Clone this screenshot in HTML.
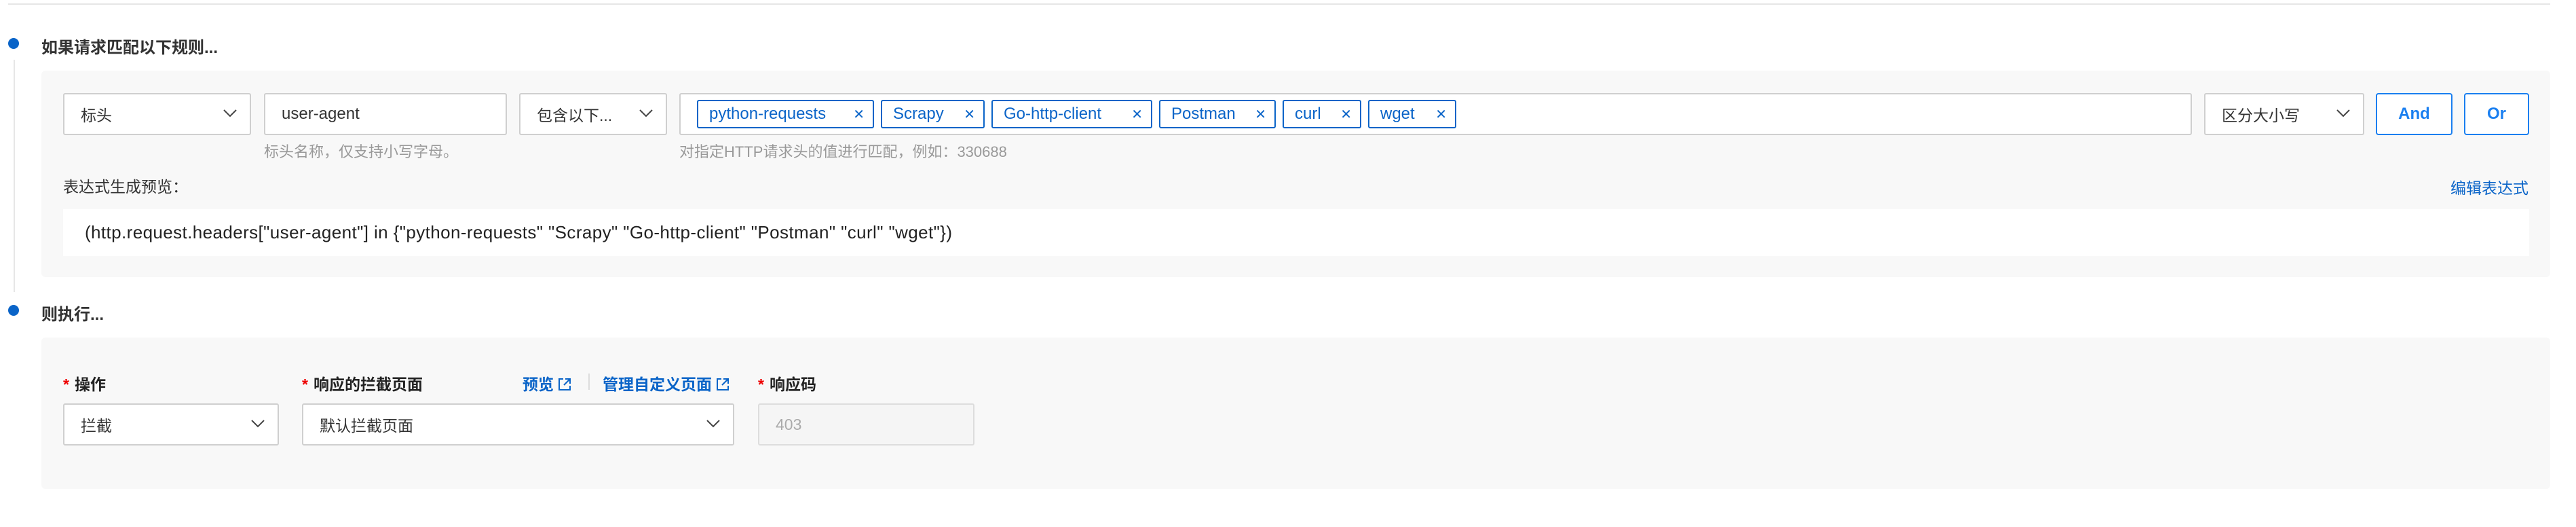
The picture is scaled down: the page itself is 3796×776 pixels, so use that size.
<!DOCTYPE html>
<html><head><meta charset="utf-8"><style>
*{box-sizing:border-box;margin:0;padding:0}
body{width:3796px;height:776px;background:#fff;position:relative;overflow:hidden;font-family:"Liberation Sans","Noto Sans CJK SC",sans-serif;font-size:23px;color:#333}
.a{position:absolute}
.box{position:absolute;background:#fff;border:2px solid #cfcfcf;border-radius:3px;display:flex;align-items:center;padding-left:24px}
.chev{position:absolute;right:18px;top:50%;margin-top:-8px}
.tag{position:absolute;top:147px;height:42px;border:2px solid #0a64c8;border-radius:3px;color:#0a64c8;display:flex;align-items:center;padding-left:16px;font-size:24px;background:#fff}
.tag span{position:absolute;right:12px;font-size:20px;font-weight:300}
.lbl{position:absolute;top:547px;font-weight:bold;font-size:23px;color:#222}
.lbl i{color:#e00;font-style:normal;margin-right:8px}
.btn{position:absolute;top:137px;height:62px;border:2px solid #1a7ff0;border-radius:4px;color:#1a7ff0;font-weight:bold;display:flex;align-items:center;justify-content:center;background:#fff;font-size:24px}
.help{position:absolute;top:206px;color:#999;font-size:22px}
.link{color:#0a64c8}
</style></head><body>
<div class="a" style="left:12px;top:5px;width:3746px;height:2px;background:#e6e6e6"></div>
<div class="a" style="left:12px;top:56px;width:16px;height:16px;border-radius:50%;background:#0a64c8"></div>
<div class="a" style="left:20px;top:88px;width:2px;height:342px;background:#e6e6e6"></div>
<div class="a" style="left:61px;top:50px;font-size:24px;font-weight:bold;color:#333">如果请求匹配以下规则...</div>
<div class="a" style="left:61px;top:104px;width:3697px;height:304px;background:#f8f8f8;border-radius:6px"></div>

<div class="box" style="left:93px;top:137px;width:277px;height:62px">标头<svg class="chev" width="22" height="14" viewBox="0 0 22 14"><polyline points="2,2 11,11 20,2" fill="none" stroke="#444" stroke-width="2"/></svg></div>
<div class="box" style="left:389px;top:137px;width:358px;height:62px;font-size:24px">user-agent</div>
<div class="box" style="left:765px;top:137px;width:218px;height:62px">包含以下...<svg class="chev" width="22" height="14" viewBox="0 0 22 14"><polyline points="2,2 11,11 20,2" fill="none" stroke="#444" stroke-width="2"/></svg></div>
<div class="box" style="left:1001px;top:137px;width:2229px;height:62px"></div>
<div class="tag" style="left:1027px;width:261px">python-requests<span>✕</span></div>
<div class="tag" style="left:1298px;width:153px">Scrapy<span>✕</span></div>
<div class="tag" style="left:1461px;width:237px">Go-http-client<span>✕</span></div>
<div class="tag" style="left:1708px;width:172px">Postman<span>✕</span></div>
<div class="tag" style="left:1890px;width:116px">curl<span>✕</span></div>
<div class="tag" style="left:2016px;width:130px">wget<span>✕</span></div>
<div class="box" style="left:3248px;top:137px;width:236px;height:62px">区分大小写<svg class="chev" width="22" height="14" viewBox="0 0 22 14"><polyline points="2,2 11,11 20,2" fill="none" stroke="#444" stroke-width="2"/></svg></div>
<div class="btn" style="left:3501px;width:113px">And</div>
<div class="btn" style="left:3631px;width:96px">Or</div>
<div class="help" style="left:389px">标头名称，仅支持小写字母。</div>
<div class="help" style="left:1001px">对指定HTTP请求头的值进行匹配，例如：330688</div>
<div class="a" style="left:93px;top:256px;font-size:23px;color:#333">表达式生成预览：</div>
<div class="a link" style="right:70px;top:258px;font-size:23px">编辑表达式</div>
<div class="a" style="left:93px;top:308px;width:3634px;height:69px;background:#fff;display:flex;align-items:center;padding-left:32px;font-size:26px;letter-spacing:0.4px;color:#222">(http.request.headers["user-agent"] in {"python-requests" "Scrapy" "Go-http-client" "Postman" "curl" "wget"})</div>

<div class="a" style="left:12px;top:449px;width:16px;height:16px;border-radius:50%;background:#0a64c8"></div>
<div class="a" style="left:61px;top:443px;font-size:24px;font-weight:bold;color:#333">则执行...</div>
<div class="a" style="left:61px;top:497px;width:3697px;height:223px;background:#f8f8f8;border-radius:6px"></div>

<div class="lbl" style="left:93px"><i>*</i>操作</div>
<div class="lbl" style="left:445px"><i>*</i>响应的拦截页面</div>
<div class="a link" style="left:770px;top:547px;font-weight:bold;font-size:23px">预览 <svg width="20" height="20" viewBox="0 0 20 20" style="vertical-align:-2px"><path d="M8 2H2v16h16v-6M11 2h7v7M18 2l-9 9" fill="none" stroke="#0a64c8" stroke-width="2"/></svg></div>
<div class="a" style="left:867px;top:550px;width:2px;height:24px;background:#ddd"></div>
<div class="a link" style="left:888px;top:547px;font-weight:bold;font-size:23px">管理自定义页面 <svg width="20" height="20" viewBox="0 0 20 20" style="vertical-align:-2px"><path d="M8 2H2v16h16v-6M11 2h7v7M18 2l-9 9" fill="none" stroke="#0a64c8" stroke-width="2"/></svg></div>
<div class="lbl" style="left:1117px"><i>*</i>响应码</div>

<div class="box" style="left:93px;top:594px;width:318px;height:62px">拦截<svg class="chev" width="22" height="14" viewBox="0 0 22 14"><polyline points="2,2 11,11 20,2" fill="none" stroke="#444" stroke-width="2"/></svg></div>
<div class="box" style="left:445px;top:594px;width:637px;height:62px">默认拦截页面<svg class="chev" width="22" height="14" viewBox="0 0 22 14"><polyline points="2,2 11,11 20,2" fill="none" stroke="#444" stroke-width="2"/></svg></div>
<div class="box" style="left:1117px;top:594px;width:319px;height:62px;background:#f5f5f5;border-color:#ddd;color:#aaa">403</div>
</body></html>
